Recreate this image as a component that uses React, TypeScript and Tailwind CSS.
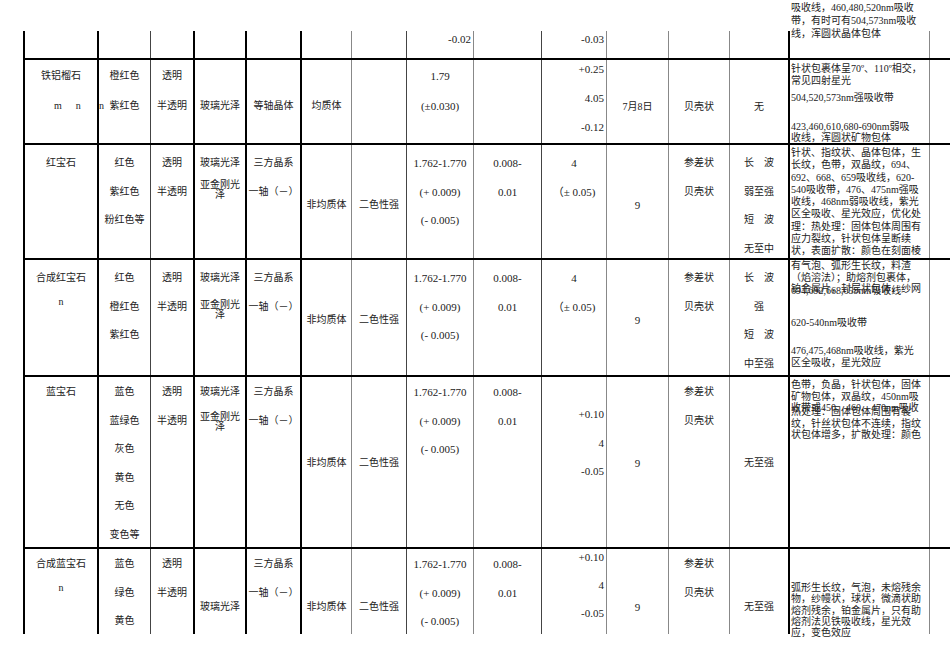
import React from "react";

// Gem identification table page (scanned-document style).
// Column widths + left border per column, measured from the page.
const COLS = [
  "w-[74px] border-l-2 border-black",
  "w-[53px] border-l-2 border-black",
  "w-[43px] border-l border-[#444]",
  "w-[52px] border-l-2 border-black",
  "w-[55px] border-l-2 border-black",
  "w-[51px] border-l-2 border-black",
  "w-[55px] border-l border-[#888]",
  "w-[67px] border-l border-[#444]",
  "w-[68px] border-l border-[#888]",
  "w-[65px] border-l border-[#444]",
  "w-[62px] border-l border-[#888]",
  "w-[61px] border-l border-[#888]",
  "w-[59px] border-l border-[#888]",
  "w-[142px] border-l-2 border-black border-r border-r-[#888]",
];

type StackProps = {
  lines: React.ReactNode[];
  pt: string;
  gap?: string;
  align?: string;
  size?: string;
};

function Stack({ lines, pt, gap = "gap-0", align = "text-center", size = "text-[10px]" }: StackProps) {
  return (
    <div className={`flex flex-col ${pt} ${gap} ${align} ${size}`}>
      {lines.map((t, i) => (
        <div key={i} className="h-[12px] leading-[12px] whitespace-nowrap">
          {t === "" ? "\u00a0" : t}
        </div>
      ))}
    </div>
  );
}

function Cell({ c, children }: { c: number; children?: React.ReactNode }) {
  return <div className={`${COLS[c]} shrink-0`}>{children}</div>;
}

function Note({ lines, pt, lh }: { lines: string[]; pt: string; lh: string }) {
  return (
    <div className={`${pt} pl-[1px] text-left text-[10px]`}>
      {lines.map((t, i) => (
        <div key={i} className={`${lh} whitespace-nowrap`}>{t}</div>
      ))}
    </div>
  );
}

// Glossy / sub-adamantine lustre cell, wrapped text
function Lustre({ pt, mt }: { pt: string; mt: string }) {
  return (
    <div className={`flex flex-col ${pt} text-center text-[10px]`}>
      <div className="h-[12px] leading-[12px]">玻璃光泽</div>
      <div className={`${mt} h-[10px] leading-[10px]`}>亚金刚光</div>
      <div className="h-[10px] leading-[10px]">泽</div>
    </div>
  );
}

const NUM = "text-[11px]";

export default function App() {
  return (
    <div className="w-[950px] h-[672px] bg-white text-[#222] font-['Liberation_Serif','Noto_Sans_CJK_SC',serif]">
      <div className="h-[637px] overflow-hidden pl-[23px] pt-[31px]">
        {/* continued row from previous page */}
        <div className="flex h-[27px]">
          {[0, 1, 2, 3, 4, 5, 6].map(i => <Cell key={i} c={i} />)}
          <Cell c={7}><Stack lines={["-0.02"]} pt="pt-[2px]" align="text-right pr-[2px]" size={NUM} /></Cell>
          <Cell c={8} />
          <Cell c={9}><Stack lines={["-0.03"]} pt="pt-[2px]" align="text-right pr-[2px]" size={NUM} /></Cell>
          <Cell c={10} />
          <Cell c={11} />
          <Cell c={12} />
          <Cell c={13}>
            <Note
              pt="-mt-[30px]"
              lh="h-[13px] leading-[13px]"
              lines={["吸收线，460,480,520nm吸收", "带，有时可有504,573nm吸收", "线，浑圆状晶体包体"]}
            />
          </Cell>
        </div>

        {/* 铁铝榴石 */}
        <div className="flex h-[85px] border-t-2 border-black">
          <Cell c={0}>
            <Stack
              pt="pt-[10px]" gap="gap-[18px]"
              lines={["铁铝榴石", <div className="text-left"><span className="pl-[29px]">m</span><span className="pl-[14px]">n</span></div>]}
            />
          </Cell>
          <Cell c={1}>
            <Stack
              pt="pt-[10px]" gap="gap-[18px]"
              lines={["橙红色", <div className="relative">紫红色<span className="absolute left-0 top-0">n</span></div>]}
            />
          </Cell>
          <Cell c={2}><Stack pt="pt-[10px]" gap="gap-[18px]" lines={["透明", "半透明"]} /></Cell>
          <Cell c={3}><Stack pt="pt-[40px]" lines={["玻璃光泽"]} /></Cell>
          <Cell c={4}><Stack pt="pt-[40px]" lines={["等轴晶体"]} /></Cell>
          <Cell c={5}><Stack pt="pt-[40px]" lines={["均质体"]} /></Cell>
          <Cell c={6} />
          <Cell c={7}><Stack pt="pt-[10px]" gap="gap-[18px]" size={NUM} lines={["1.79", "(±0.030)"]} /></Cell>
          <Cell c={8} />
          <Cell c={9}>
            <Stack pt="pt-[3px]" gap="gap-[17px]" align="text-right pr-[2px]" size={NUM} lines={["+0.25", "4.05", "-0.12"]} />
          </Cell>
          <Cell c={10}><Stack pt="pt-[41px]" lines={["7月8日"]} /></Cell>
          <Cell c={11}><Stack pt="pt-[41px]" lines={["贝壳状"]} /></Cell>
          <Cell c={12}><Stack pt="pt-[41px]" lines={["无"]} /></Cell>
          <Cell c={13}>
            <div className="pt-[3px] pl-[1px] text-left text-[10px] whitespace-nowrap">
              <div className="h-[12px] leading-[12px]">针状包裹体呈70º、110º相交，</div>
              <div className="h-[12px] leading-[12px]">常见四射星光</div>
              <div className="mt-[5px] h-[12px] leading-[12px]">504,520,573nm强吸收带</div>
              <div className="mt-[17px] h-[11px] leading-[11px]">423,460,610,680-690nm弱吸</div>
              <div className="h-[11px] leading-[11px]">收线，浑圆状矿物包体</div>
            </div>
          </Cell>
        </div>

        {/* 红宝石 */}
        <div className="flex h-[115px] border-t-2 border-black">
          <Cell c={0}><Stack pt="pt-[12px]" lines={["红宝石"]} /></Cell>
          <Cell c={1}><Stack pt="pt-[12px]" gap="gap-[16.5px]" lines={["红色", "紫红色", "粉红色等"]} /></Cell>
          <Cell c={2}><Stack pt="pt-[12px]" gap="gap-[16.5px]" lines={["透明", "半透明"]} /></Cell>
          <Cell c={3}><Lustre pt="pt-[12px]" mt="mt-[11px]" /></Cell>
          <Cell c={4}><Stack pt="pt-[12px]" gap="gap-[16.5px]" lines={["三方晶系", "一轴（－）"]} /></Cell>
          <Cell c={5}><Stack pt="pt-[54px]" lines={["非均质体"]} /></Cell>
          <Cell c={6}><Stack pt="pt-[54px]" lines={["二色性强"]} /></Cell>
          <Cell c={7}><Stack pt="pt-[12px]" gap="gap-[16.5px]" size={NUM} lines={["1.762-1.770", "(+ 0.009)", "(- 0.005)"]} /></Cell>
          <Cell c={8}><Stack pt="pt-[12px]" gap="gap-[16.5px]" size={NUM} lines={["0.008-", "0.01"]} /></Cell>
          <Cell c={9}><Stack pt="pt-[12px]" gap="gap-[16.5px]" size={NUM} lines={["4", "（± 0.05)"]} /></Cell>
          <Cell c={10}><Stack pt="pt-[54px]" size={NUM} lines={["9"]} /></Cell>
          <Cell c={11}><Stack pt="pt-[12px]" gap="gap-[16.5px]" lines={["参差状", "贝壳状"]} /></Cell>
          <Cell c={12}><Stack pt="pt-[12px]" gap="gap-[16.5px]" lines={["长　波", "弱至强", "短　波", "无至中"]} /></Cell>
          <Cell c={13}>
            <Note
              pt="pt-[2px]"
              lh="h-[12.3px] leading-[12.3px]"
              lines={[
                "针状、指纹状、晶体包体，生",
                "长纹，色带，双晶纹，694、",
                "692、668、659吸收线，620-",
                "540吸收带，476、475nm强吸",
                "收线，468nm弱吸收线，紫光",
                "区全吸收、星光效应，优化处",
                "理：热处理：固体包体周围有",
                "应力裂纹，针状包体呈断续",
                "状，表面扩散：颜色在刻面棱",
              ]}
            />
          </Cell>
        </div>

        {/* 合成红宝石 */}
        <div className="flex h-[117px] border-t-2 border-black">
          <Cell c={0}><Stack pt="pt-[12px]" gap="gap-[12px]" lines={["合成红宝石", "n"]} /></Cell>
          <Cell c={1}><Stack pt="pt-[12px]" gap="gap-[16.5px]" lines={["红色", "橙红色", "紫红色"]} /></Cell>
          <Cell c={2}><Stack pt="pt-[12px]" gap="gap-[16.5px]" lines={["透明", "半透明"]} /></Cell>
          <Cell c={3}><Lustre pt="pt-[12px]" mt="mt-[16px]" /></Cell>
          <Cell c={4}><Stack pt="pt-[12px]" gap="gap-[16.5px]" lines={["三方晶系", "一轴（－）"]} /></Cell>
          <Cell c={5}><Stack pt="pt-[54px]" lines={["非均质体"]} /></Cell>
          <Cell c={6}><Stack pt="pt-[54px]" lines={["二色性强"]} /></Cell>
          <Cell c={7}><Stack pt="pt-[12px]" gap="gap-[16.5px]" size={NUM} lines={["1.762-1.770", "(+ 0.009)", "(- 0.005)"]} /></Cell>
          <Cell c={8}><Stack pt="pt-[12px]" gap="gap-[16.5px]" size={NUM} lines={["0.008-", "0.01"]} /></Cell>
          <Cell c={9}><Stack pt="pt-[12px]" gap="gap-[16.5px]" size={NUM} lines={["4", "（± 0.05)"]} /></Cell>
          <Cell c={10}><Stack pt="pt-[54px]" size={NUM} lines={["9"]} /></Cell>
          <Cell c={11}><Stack pt="pt-[12px]" gap="gap-[16.5px]" lines={["参差状", "贝壳状"]} /></Cell>
          <Cell c={12}><Stack pt="pt-[12px]" gap="gap-[16.5px]" lines={["长　波", "强", "短　波", "中至强"]} /></Cell>
          <Cell c={13}>
            <div className="grid">
              <div className="col-start-1 row-start-1">
                <Note
                  pt="pt-0"
                  lh="h-[11.7px] leading-[11.7px]"
                  lines={["有气泡、弧形生长纹，料渣", "（焰溶法）；助熔剂包裹体，", "铂金属片，封层状包体，纱网"]}
                />
              </div>
              <div className="col-start-1 row-start-1 pt-[25px] pl-[1px] text-left text-[10px] whitespace-nowrap">
                <div className="h-[11.7px] leading-[11.7px]">694,692,668,659nm吸收线</div>
                <div className="mt-[20px] h-[11.7px] leading-[11.7px]">620-540nm吸收带</div>
                <div className="mt-[17px] h-[11.7px] leading-[11.7px]">476,475,468nm吸收线，紫光</div>
                <div className="h-[11.7px] leading-[11.7px]">区全吸收，星光效应</div>
              </div>
            </div>
          </Cell>
        </div>

        {/* 蓝宝石 */}
        <div className="flex h-[172px] border-t-2 border-black">
          <Cell c={0}><Stack pt="pt-[9px]" lines={["蓝宝石"]} /></Cell>
          <Cell c={1}>
            <Stack pt="pt-[9px]" gap="gap-[16.6px]" lines={["蓝色", "蓝绿色", "灰色", "黄色", "无色", "变色等"]} />
          </Cell>
          <Cell c={2}><Stack pt="pt-[9px]" gap="gap-[16.6px]" lines={["透明", "半透明"]} /></Cell>
          <Cell c={3}><Lustre pt="pt-[9px]" mt="mt-[14px]" /></Cell>
          <Cell c={4}><Stack pt="pt-[9px]" gap="gap-[16.6px]" lines={["三方晶系", "一轴（－）"]} /></Cell>
          <Cell c={5}><Stack pt="pt-[80px]" lines={["非均质体"]} /></Cell>
          <Cell c={6}><Stack pt="pt-[80px]" lines={["二色性强"]} /></Cell>
          <Cell c={7}><Stack pt="pt-[9px]" gap="gap-[16.6px]" size={NUM} lines={["1.762-1.770", "(+ 0.009)", "(- 0.005)"]} /></Cell>
          <Cell c={8}><Stack pt="pt-[9px]" gap="gap-[16.6px]" size={NUM} lines={["0.008-", "0.01"]} /></Cell>
          <Cell c={9}>
            <Stack pt="pt-[31px]" gap="gap-[16.5px]" align="text-right pr-[2px]" size={NUM} lines={["+0.10", "4", "-0.05"]} />
          </Cell>
          <Cell c={10}><Stack pt="pt-[80px]" size={NUM} lines={["9"]} /></Cell>
          <Cell c={11}><Stack pt="pt-[9px]" gap="gap-[16.6px]" lines={["参差状", "贝壳状"]} /></Cell>
          <Cell c={12}><Stack pt="pt-[80px]" lines={["无至强"]} /></Cell>
          <Cell c={13}>
            <div className="grid">
              <div className="col-start-1 row-start-1">
                <Note
                  pt="pt-[2px]"
                  lh="h-[11.7px] leading-[11.7px]"
                  lines={["色带，负晶，针状包体，固体", "矿物包体，双晶纹，450nm吸", "收带或450、460、470nm吸收"]}
                />
              </div>
              <div className="col-start-1 row-start-1">
                <Note
                  pt="pt-[29px]"
                  lh="h-[11.7px] leading-[11.7px]"
                  lines={["热处理：固体包体周围有裂", "纹，针丝状包体不连续，指纹", "状包体增多，扩散处理：颜色"]}
                />
              </div>
            </div>
          </Cell>
        </div>

        {/* 合成蓝宝石 */}
        <div className="flex h-[87px] border-t-2 border-black">
          <Cell c={0}><Stack pt="pt-[9px]" gap="gap-[12px]" lines={["合成蓝宝石", "n"]} /></Cell>
          <Cell c={1}><Stack pt="pt-[9px]" gap="gap-[16.6px]" lines={["蓝色", "绿色", "黄色"]} /></Cell>
          <Cell c={2}><Stack pt="pt-[9px]" gap="gap-[16.6px]" lines={["透明", "半透明"]} /></Cell>
          <Cell c={3}><Stack pt="pt-[52px]" lines={["玻璃光泽"]} /></Cell>
          <Cell c={4}><Stack pt="pt-[9px]" gap="gap-[16.6px]" lines={["三方晶系", "一轴（－）"]} /></Cell>
          <Cell c={5}><Stack pt="pt-[52px]" lines={["非均质体"]} /></Cell>
          <Cell c={6}><Stack pt="pt-[52px]" lines={["二色性强"]} /></Cell>
          <Cell c={7}><Stack pt="pt-[9px]" gap="gap-[16.6px]" size={NUM} lines={["1.762-1.770", "(+ 0.009)", "(- 0.005)"]} /></Cell>
          <Cell c={8}><Stack pt="pt-[9px]" gap="gap-[16.6px]" size={NUM} lines={["0.008-", "0.01"]} /></Cell>
          <Cell c={9}>
            <Stack pt="pt-[2px]" gap="gap-[16px]" align="text-right pr-[2px]" size={NUM} lines={["+0.10", "4", "-0.05"]} />
          </Cell>
          <Cell c={10}><Stack pt="pt-[52px]" size={NUM} lines={["9"]} /></Cell>
          <Cell c={11}><Stack pt="pt-[9px]" gap="gap-[16.6px]" lines={["参差状", "贝壳状"]} /></Cell>
          <Cell c={12}><Stack pt="pt-[52px]" lines={["无至强"]} /></Cell>
          <Cell c={13}>
            <Note
              pt="pt-[33px]"
              lh="h-[11.3px] leading-[11.3px]"
              lines={[
                "弧形生长纹，气泡，未熔残余",
                "物，纱幔状，球状，微滴状助",
                "熔剂残余，铂金属片，只有助",
                "熔剂法见铁吸收线，星光效",
                "应，变色效应",
              ]}
            />
          </Cell>
        </div>
      </div>
    </div>
  );
}
